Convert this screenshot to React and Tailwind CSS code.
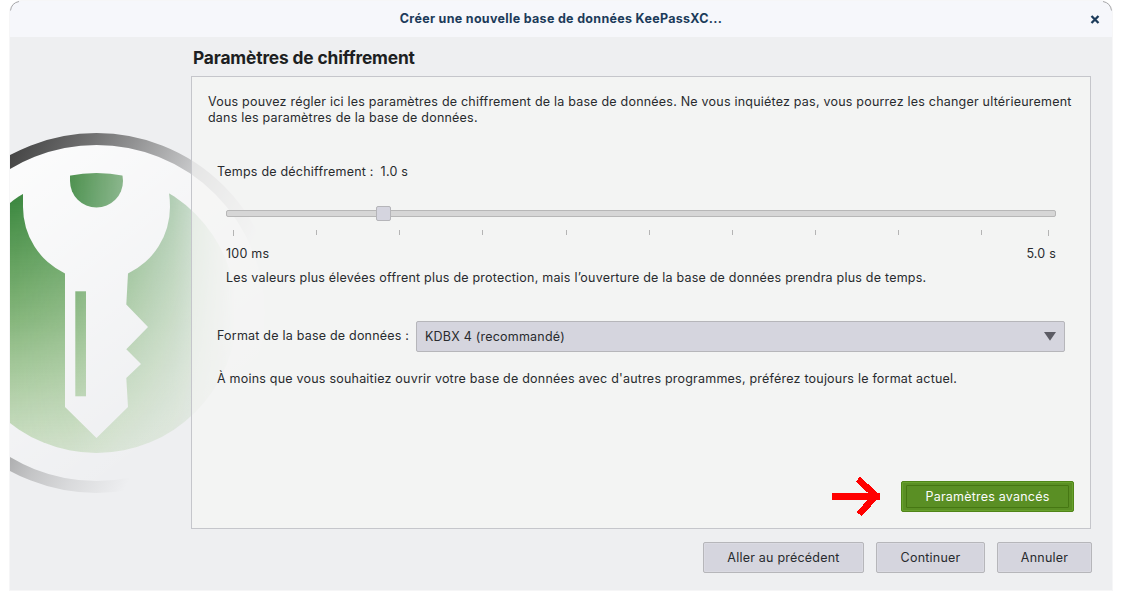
import React from "react";

function KeyWatermark() {
  return (
    <svg className="absolute left-0 top-0" width="280" height="589" viewBox="10 1 280 589" aria-hidden="true">
      <defs>
        <linearGradient id="ring" gradientUnits="userSpaceOnUse" x1="10" y1="150" x2="239" y2="268">
          <stop offset="0" stopColor="#404040" stopOpacity="0.98" />
          <stop offset="0.26" stopColor="#404040" stopOpacity="0.72" />
          <stop offset="0.65" stopColor="#404040" stopOpacity="0.24" />
          <stop offset="0.8" stopColor="#404040" stopOpacity="0.12" />
          <stop offset="1" stopColor="#404040" stopOpacity="0" />
        </linearGradient>
        <linearGradient id="disk" gradientUnits="userSpaceOnUse" x1="30" y1="150" x2="220" y2="400">
          <stop offset="0" stopColor="#fff" stopOpacity="0.8" />
          <stop offset="0.5" stopColor="#fff" stopOpacity="0.4" />
          <stop offset="1" stopColor="#fff" stopOpacity="0" />
        </linearGradient>
        <linearGradient id="green" gradientUnits="userSpaceOnUse" x1="0" y1="173" x2="0" y2="453">
          <stop offset="0" stopColor="#327f32" stopOpacity="0.97" />
          <stop offset="0.1" stopColor="#36843a" stopOpacity="0.97" />
          <stop offset="0.52" stopColor="#408e30" stopOpacity="0.63" />
          <stop offset="1" stopColor="#70ad50" stopOpacity="0.27" />
        </linearGradient>
        <linearGradient id="fade" gradientUnits="userSpaceOnUse" x1="10" y1="0" x2="236" y2="0">
          <stop offset="0" stopColor="#fff" />
          <stop offset="0.28" stopColor="#fff" stopOpacity="0.87" />
          <stop offset="0.48" stopColor="#fff" stopOpacity="0.6" />
          <stop offset="0.72" stopColor="#fff" stopOpacity="0.36" />
          <stop offset="1" stopColor="#fff" stopOpacity="0" />
        </linearGradient>
        <mask id="cut" maskUnits="userSpaceOnUse" x="0" y="100" width="300" height="400">
          <rect x="0" y="100" width="300" height="400" fill="url(#fade)" />
          <path
            d="M23 150V207A73.5 73.5 0 0 0 65 273.5V407L96.5 438L128 407L126.300 378L141 364L126.300 349.300L148 327L126.300 304.500L128 273.500A73.500 73.500 0 0 0 170 207Q170 200 169 193V150Z"
            fill="#000"
          />
          <path d="M70 165V181A26.500 26.500 0 0 0 123 181L121.500 165Z" fill="url(#fade)" />
          <rect x="75.300" y="291.300" width="10.700" height="105" fill="url(#fade)" />
        </mask>
      </defs>
      <circle cx="96.5" cy="313" r="168" fill="url(#disk)" />
      <circle cx="96.5" cy="313" r="174" fill="none" stroke="url(#ring)" strokeWidth="12" />
      <circle cx="96.5" cy="313" r="140" fill="url(#green)" mask="url(#cut)" />
    </svg>
  );
}

function PushButton({ className, children }) {
  return (
    <button
      className={
        "h-[31px] rounded-[2px] border border-[#b6b6ba] bg-[#d5d5de] pt-[2px] text-center shadow-[inset_0_0_0_1px_#dadae2] " +
        className
      }
    >
      {children}
    </button>
  );
}

function Slider() {
  const steps = Array.from({ length: 9 }, (_, i) => i);
  return (
    <div className="mt-[24px] ml-[34px] w-[830px]">
      <div className="relative flex h-[15px] items-center">
        <div className="h-[7px] w-full rounded-[2px] border border-[#b7b7b7] bg-[#d6d6d6]" />
        <div className="absolute left-[150px] top-0 size-[15px] rounded-[2px] border border-[#b5b5b9] bg-[#d5d5df]" />
      </div>
      <div className="mt-[9px] flex h-[6px] pl-[7px]">
        <div className="h-[6px] w-[83.13px] border-l border-[#b4b4b4]" />
        {steps.map((i) => (
          <div key={i} className="h-[5px] w-[83.13px] border-l border-[#b4b4b4]" />
        ))}
        <div className="-ml-[16.3px] h-[6px] w-px bg-[#b4b4b4]" />
      </div>
      <div className="mt-[8px] flex justify-between leading-[20px]">
        <span>100 ms</span>
        <span>5.0 s</span>
      </div>
    </div>
  );
}

export default function App() {
  return (
    <div className="h-[600px] w-[1122px] overflow-hidden bg-white pl-[10px] pt-px font-['Inter',sans-serif] text-[12.5px] tracking-[0.215px] text-[#282b2e]">
      <div className="relative flex h-[589px] w-[1102px] flex-col rounded-t-[12px] bg-[#eeeff1] shadow-[0_0_0_1px_#f6f6f7]">
        <svg className="absolute left-0 top-0" width="1102" height="12" fill="none" stroke="#a9a9ab">
          <path d="M.5 9.500Q1.500 2 9 .500M1093 .500Q1100.500 2 1101.500 9.500" />
        </svg>
        <header className="flex h-[36px] shrink-0 items-center rounded-t-[12px] bg-[#f6f7fb] text-[#1c3b5a]">
          <div className="w-[40px]" />
          <h1 className="flex-1 text-center text-[12.5px] font-bold tracking-[0.31px]">Créer une nouvelle base de données KeePassXC...</h1>
          <div className="flex w-[40px] justify-center pl-[5px]">
            <svg width="10" height="9" viewBox="0 0 10 9" fill="none" stroke="currentColor" strokeWidth="2.3">
              <path d="M1.500 1 8.500 8M8.500 1 1.500 8" />
            </svg>
          </div>
        </header>
        <KeyWatermark />
        <main className="relative flex flex-1 flex-col pl-[181px]">
          <h2 className="flex h-[39px] items-center pl-[2px] pt-[2px] text-[17.33px] font-bold tracking-[-0.15px] text-[#1d1f22]">
            Paramètres de chiffrement
          </h2>
          <section className="flex h-[453px] w-[900px] flex-col border border-[#c5c6cb] bg-[#f6f6f5]/65">
            <p className="ml-[16px] mt-[17px] whitespace-nowrap leading-[16px]">
              Vous pouvez régler ici les paramètres de chiffrement de la base de données. Ne vous inquiétez pas, vous
              pourrez les changer ultérieurement
              <br />
              dans les paramètres de la base de données.
            </p>
            <div className="ml-[25px] mt-[36px] flex gap-[7px] leading-[20px]">
              <span>Temps de déchiffrement :</span>
              <span>1.0 s</span>
            </div>
            <Slider />
            <p className="ml-[34px] mt-[4px] whitespace-nowrap leading-[20px]">
              Les valeurs plus élevées offrent plus de protection, mais l’ouverture de la base de données prendra plus de
              temps.
            </p>
            <div className="ml-[25px] mt-[33px] flex h-[31px] items-center">
              <span className="w-[199px] whitespace-nowrap">Format de la base de données :</span>
              <div className="flex h-[31px] w-[649px] items-center justify-between rounded-[2px] border border-[#b6b6ba] bg-[#d5d5de] pl-[8px] pr-[8px]">
                <span className="pt-[2px]">KDBX 4 (recommandé)</span>
                <svg width="12" height="9" viewBox="0 0 12 9" fill="#5c5c64">
                  <path d="M0 0H12L6 8.700Z" />
                </svg>
              </div>
            </div>
            <p className="ml-[25px] mt-[17px] whitespace-nowrap leading-[20px]">
              À moins que vous souhaitiez ouvrir votre base de données avec d&apos;autres programmes, préférez toujours le
              format actuel.
            </p>
            <div className="mb-[16px] mr-[16px] mt-auto flex items-end justify-end">
              <svg className="-mb-[5px] mr-[20px]" width="49" height="41" viewBox="0 0 49 41" fill="none" stroke="#f00" shapeRendering="crispEdges">
                <path d="M0 20.500H44" strokeWidth="7" />
                <path d="M26 3 44 20 27 38" strokeWidth="6.5" />
                <path d="M40 17H48V24H40Z" fill="#f00" stroke="none" />
              </svg>
              <button className="h-[31px] w-[173px] rounded-[2px] border border-[#508518] bg-[#5a8f24] p-[3px] text-[#fcfcfc] shadow-[inset_0_0_0_1px_#67a12d]">
                <span className="mx-px flex h-full items-center justify-center rounded-[1px] border border-[#467713] pt-[2px]">
                  Paramètres avancés
                </span>
              </button>
            </div>
          </section>
          <footer className="mt-[13px] flex gap-[12px] pl-[512px]">
            <PushButton className="w-[161px]">Aller au précédent</PushButton>
            <PushButton className="w-[109px]">Continuer</PushButton>
            <PushButton className="w-[95px]">Annuler</PushButton>
          </footer>
        </main>
      </div>
    </div>
  );
}
